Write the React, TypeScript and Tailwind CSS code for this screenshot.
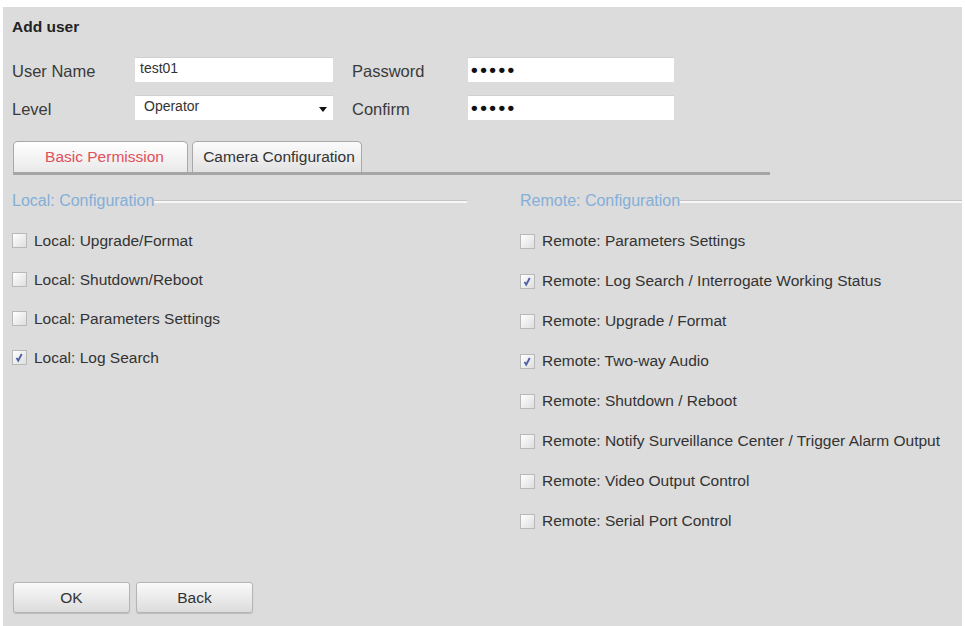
import type { ReactNode } from 'react';

const LOCAL = [
  { label: 'Local: Upgrade/Format', checked: false },
  { label: 'Local: Shutdown/Reboot', checked: false },
  { label: 'Local: Parameters Settings', checked: false },
  { label: 'Local: Log Search', checked: true },
];

const REMOTE = [
  { label: 'Remote: Parameters Settings', checked: false },
  { label: 'Remote: Log Search / Interrogate Working Status', checked: true },
  { label: 'Remote: Upgrade / Format', checked: false },
  { label: 'Remote: Two-way Audio', checked: true },
  { label: 'Remote: Shutdown / Reboot', checked: false },
  { label: 'Remote: Notify Surveillance Center / Trigger Alarm Output', checked: false },
  { label: 'Remote: Video Output Control', checked: false },
  { label: 'Remote: Serial Port Control', checked: false },
];

function Checkbox({ checked }: { checked: boolean }) {
  return (
    <span className="relative mr-[7px] h-[15px] w-[15px] shrink-0 border border-[#b9b9b9] bg-gradient-to-br from-[#ffffff] to-[#dedede]">
      {checked && (
        <svg viewBox="0 0 14 14" className="absolute left-0 top-0 h-[13px] w-[13px]">
          <path d="M3.8 7.4 L5.6 10.4 L9.4 3.2" fill="none" stroke="#4a5fa3" strokeWidth="2" />
        </svg>
      )}
    </span>
  );
}

function SectionTitle({ children }: { children: ReactNode }) {
  return (
    <div className="flex h-[18px] items-center">
      <span className="text-[16px] leading-[18px] text-[#84afd8]">{children}</span>
      <div className="h-[3px] flex-1 border-t border-[#c4c4c4] bg-[#f7f7f7]" />
    </div>
  );
}

function Field({ children, className = '' }: { children: ReactNode; className?: string }) {
  return (
    <div className={`relative h-[25px] bg-white border-t border-[#d0d0d0] text-[14px] leading-[20px] text-[#333] ${className}`}>
      {children}
    </div>
  );
}

function Label({ children }: { children: ReactNode }) {
  return <div className="pt-[4px] text-[16.5px] leading-[20px] text-[#3a3a3a]">{children}</div>;
}

function Dots() {
  return (
    <span className="block pl-[3px] text-[19px] font-bold leading-[23px] tracking-[2.5px] text-[#111]">
      •••••
    </span>
  );
}

function Button({ children }: { children: ReactNode }) {
  return (
    <button className="h-[31px] w-[117px] rounded-[3px] border border-[#b4b4b4] bg-gradient-to-b from-[#fafafa] to-[#dcdcdc] text-[15.5px] text-[#333] shadow-[0_1px_1px_rgba(0,0,0,0.15)]">
      {children}
    </button>
  );
}

export default function App() {
  return (
    <div className="h-[626px] w-[965px] bg-white pl-[3px] pt-[7px] font-['Liberation_Sans',Arial,sans-serif]">
      <div className="flex h-[619px] w-[959px] flex-col bg-[#dcdcdc] pl-[9px] pt-[11px]">
        <div className="h-[18px] text-[15.5px] font-bold leading-[18px] text-[#222]">Add user</div>

        {/* form */}
        <div className="mt-[21px] grid grid-cols-[123px_198px_19px_116px_206px] gap-y-[13px]">
          <Label>User Name</Label>
          <Field className="pl-[5px]">test01</Field>
          <div />
          <Label>Password</Label>
          <Field>
            <Dots />
          </Field>

          <Label>Level</Label>
          <Field className="pl-[9px]">
            Operator
            <svg viewBox="0 0 8 5" className="absolute right-[6px] top-[11px] h-[5px] w-[8px]">
              <path d="M0 0 H8 L4 5 Z" fill="#111" />
            </svg>
          </Field>
          <div />
          <Label>Confirm</Label>
          <Field>
            <Dots />
          </Field>
        </div>

        {/* tabs */}
        <div className="ml-[1px] mt-[21px] w-[757px]">
          <div className="flex h-[31px] items-end gap-[4px]">
            <div className="flex h-[31px] w-[175px] items-center justify-center rounded-t-[5px] border border-b-0 border-[#a9a9a9] bg-gradient-to-b from-[#ffffff] to-[#e9e9e9] pl-[8px] text-[15.5px] text-[#e0505a]">
              Basic Permission
            </div>
            <div className="flex h-[31px] w-[170px] items-center justify-center rounded-t-[5px] border border-b-0 border-[#a9a9a9] bg-gradient-to-b from-[#fbfbfb] to-[#e2e2e2] pl-[4px] text-[15.5px] text-[#333]">
              Camera Configuration
            </div>
          </div>
          <div className="h-[3px] bg-[#a6a6a6]" />
        </div>

        {/* permissions */}
        <div className="mt-[17px] flex">
          <div className="w-[455px]">
            <SectionTitle>Local: Configuration</SectionTitle>
            <div className="mt-[11px] flex flex-col">
              {LOCAL.map((item) => (
                <div key={item.label} className="flex h-[39px] items-center text-[15.5px] text-[#333]">
                  <Checkbox checked={item.checked} />
                  {item.label}
                </div>
              ))}
            </div>
          </div>
          <div className="ml-[53px] flex-1">
            <SectionTitle>Remote: Configuration</SectionTitle>
            <div className="mt-[11px] flex flex-col">
              {REMOTE.map((item) => (
                <div key={item.label} className="flex h-[40px] items-center text-[15.5px] text-[#333]">
                  <Checkbox checked={item.checked} />
                  {item.label}
                </div>
              ))}
            </div>
          </div>
        </div>

        {/* actions */}
        <div className="ml-[1px] mt-[41px] flex gap-[6px]">
          <Button>OK</Button>
          <Button>Back</Button>
        </div>
      </div>
    </div>
  );
}
